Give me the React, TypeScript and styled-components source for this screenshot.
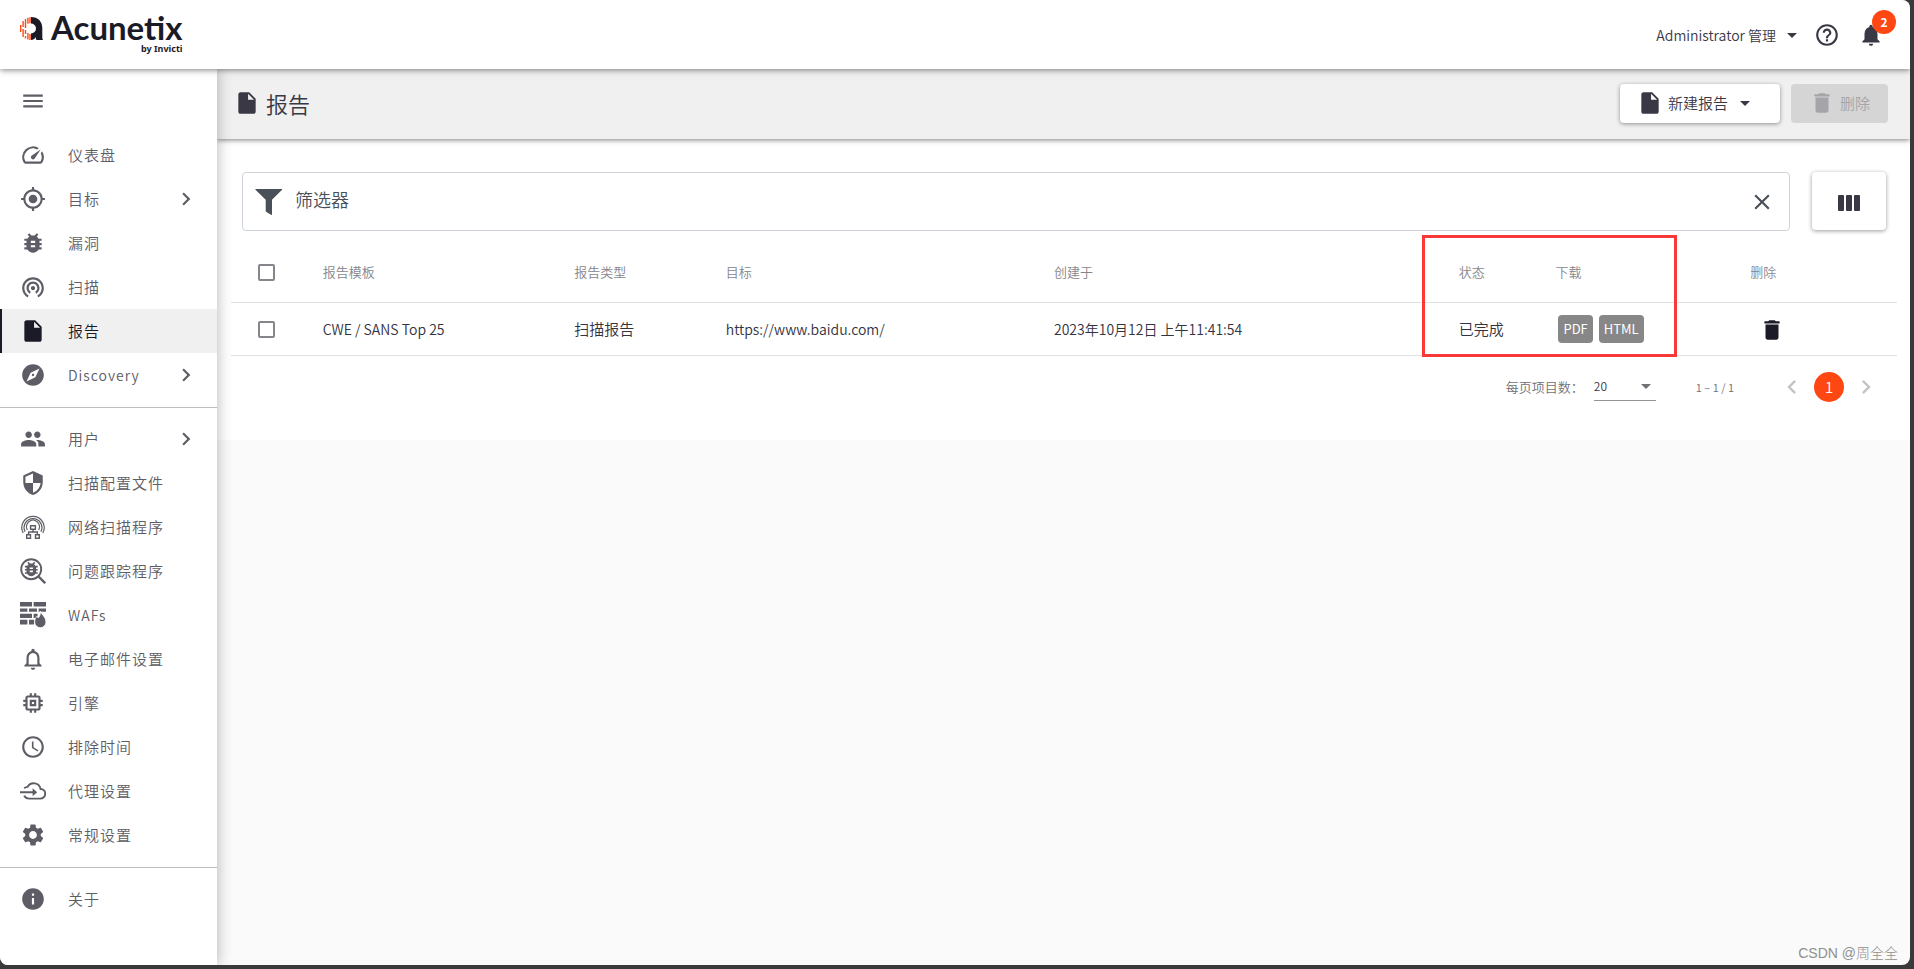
import React from "react";
import styled, { createGlobalStyle, css } from "styled-components";
import {
  MdMenu, MdGpsFixed, MdBugReport, MdInsertDriveFile, MdExplore, MdPeople,
  MdInfo, MdSettings, MdAccessTime, MdNotificationsNone, MdNotifications,
  MdHelpOutline, MdChevronRight, MdChevronLeft, MdArrowDropDown, MdDelete, MdClose,
  MdWifiTethering, MdMemory, MdSecurity,
} from "react-icons/md";

const ink = "#1b1b28";
const slate = "#5e5d66";
const accent = "#ff4713";

const GlobalStyle = createGlobalStyle`
  *, *::before, *::after { box-sizing: border-box; }
  body {
    margin: 0;
    background: #3b3a3a;
    color: #33323f;
    font-family: "Noto Sans CJK SC", "Noto Sans", sans-serif;
    font-size: 14px;
    font-weight: 350;
    line-height: 20px;
  }
  button, input, select { font: inherit; color: inherit; }
  svg { display: block; flex: none; }
`;

const Frame = styled.div`
  min-height: 100vh;
  padding: 0 4px 4px 0;
  display: flex;
`;

const Page = styled.div`
  position: relative;
  flex: 1;
  min-width: 0;
  display: flex;
  flex-direction: column;
  overflow: hidden;
  border-radius: 0 8px 8px 8px;
  background: #fafafa;
`;

const Header = styled.header`
  position: relative;
  z-index: 3;
  display: flex;
  justify-content: space-between;
  align-items: center;
  height: 69px;
  padding: 0 22px 0 20px;
  background: #fff;
  box-shadow: 0 1px 6px rgba(0, 0, 0, 0.5);
`;

const Brand = styled.a`
  display: flex;
  gap: 8px;
  padding-bottom: 4px;
  color: ${ink};
  text-decoration: none;
`;

const Mark = styled.svg`
  margin-top: 6px;
`;

const BrandText = styled.span`
  display: flex;
  flex-direction: column;
  align-items: flex-end;
`;

const BrandName = styled.span`
  font: 700 33px/32px Lato, sans-serif;
`;

const BrandBy = styled.span`
  font: 700 9px/12px "Noto Sans", sans-serif;
`;

const HeaderTools = styled.div`
  display: flex;
  align-items: center;
  color: #3a3845;
`;

const PlainButton = styled.button`
  display: flex;
  align-items: center;
  padding: 0;
  border: 0;
  background: none;
  cursor: pointer;
`;

const UserButton = styled(PlainButton)`
  gap: 4px;
  margin-right: 10px;
`;

const BellButton = styled(PlainButton)`
  position: relative;
  margin: 0 4px 0 18px;
`;

const Badge = styled.span`
  position: absolute;
  left: 14px;
  bottom: 14px;
  width: 24px;
  border-radius: 12px;
  background: ${accent};
  color: #fff;
  font-size: 12px;
  font-weight: 700;
  line-height: 24px;
  text-align: center;
`;

const Body = styled.div`
  flex: 1;
  display: flex;
`;

const Sidebar = styled.nav`
  position: relative;
  z-index: 2;
  flex: none;
  width: 217px;
  background: #fff;
  box-shadow: 0 0 14px rgba(0, 0, 0, 0.3);
`;

const MenuToggle = styled(PlainButton)`
  height: 64px;
  padding-left: 20px;
  color: ${slate};
`;

const NavGroup = styled.ul`
  margin: 0;
  padding: 0 0 10px;
  list-style: none;

  & + & {
    padding-top: 9px;
    border-top: 1px solid #bdbdbf;
  }
`;

const NavLink = styled.a<{ $active?: boolean }>`
  display: flex;
  align-items: center;
  height: 44px;
  padding: 0 18px;
  border-left: 2px solid transparent;
  color: ${slate};
  letter-spacing: 1px;
  text-decoration: none;

  ${({ $active }) => $active && css`
    border-color: ${ink};
    background: #f0f0f0;
    color: ${ink};
  `}
`;

const NavIcon = styled.span`
  display: flex;
  justify-content: center;
  width: 26px;
  margin-right: 22px;
`;

const NavLabel = styled.span`
  flex: 1;
  font-size: 15px;

  &:lang(en) { font-size: 14px; }
`;

const Main = styled.main`
  flex: 1;
  min-width: 0;
`;

const TitleBar = styled.div`
  position: relative;
  z-index: 1;
  display: flex;
  justify-content: space-between;
  align-items: center;
  height: 70px;
  padding: 0 22px 2px 17px;
  background: #f0f0f0;
  color: #3a3845;
  box-shadow: 0 1px 5px rgba(0, 0, 0, 0.5);
`;

const Title = styled.h1`
  display: flex;
  align-items: center;
  gap: 6px;
  margin: 0;
  font-size: 22px;
  font-weight: 350;
  line-height: 32px;
`;

const Actions = styled.div`
  display: flex;
  gap: 11px;
`;

const ActionButton = styled.button`
  display: flex;
  align-items: center;
  gap: 5px;
  height: 39px;
  padding: 0 23px 0 17px;
  border: 0;
  border-radius: 4px;
  background: #fff;
  font-size: 15px;
  box-shadow: 0 1px 4px rgba(0, 0, 0, 0.4);
  cursor: pointer;

  &:disabled {
    padding: 0 18px;
    background: #d5d5d5;
    color: #a5a4a9;
    box-shadow: none;
  }
`;

const Panel = styled.section`
  padding: 33px 13px 38px 14px;
  background: #fff;
`;

const FilterRow = styled.div`
  display: flex;
  gap: 22px;
  padding: 0 11px;
`;

const FilterBox = styled.div`
  flex: 1;
  display: flex;
  align-items: center;
  gap: 12px;
  height: 59px;
  padding: 0 14px 0 12px;
  border: 1px solid #ced4da;
  border-radius: 4px;
  color: #495057;
`;

const FilterInput = styled.input`
  flex: 1;
  min-width: 0;
  padding: 0 0 6px;
  border: 0;
  outline: 0;
  background: none;
  font-size: 18px;

  &::placeholder { color: #495057; opacity: 1; }
`;

const ColumnsButton = styled.button`
  display: flex;
  align-items: center;
  justify-content: center;
  width: 74px;
  height: 58px;
  padding: 3px 0 0;
  border: 0;
  border-radius: 4px;
  background: #fff;
  box-shadow: 0 1px 4px rgba(0, 0, 0, 0.4);
  color: #3a3845;
  cursor: pointer;
`;

const TableArea = styled.div`
  position: relative;
  margin-top: 11px;
`;

const Table = styled.table`
  width: 100%;
  table-layout: fixed;
  border-collapse: collapse;
`;

const Th = styled.th`
  height: 60px;
  padding: 0;
  border-bottom: 1px solid #e0e0e0;
  color: #86858b;
  font-size: 13px;
  font-weight: 350;
  text-align: left;
`;

const Td = styled.td<{ $cjk?: boolean }>`
  height: 53px;
  padding: 0;
  border-bottom: 1px solid #e0e0e0;
  font-size: ${({ $cjk }) => ($cjk ? 15 : 14)}px;
`;

const Col = styled.col<{ $share: number }>`
  width: ${({ $share }) => $share}%;
`;

const Tick = styled.input`
  display: block;
  appearance: none;
  width: 17px;
  height: 17px;
  margin: 2px 0 0 27px;
  border: 2px solid #86858b;
  border-radius: 2px;
`;

const Chips = styled.div`
  display: flex;
  gap: 6px;
  padding-left: 3px;
`;

const Chip = styled.a`
  padding: 4px 5px;
  border-radius: 4px;
  background: #878787;
  color: #fff;
  font-size: 13px;
  font-weight: 400;
  text-decoration: none;
`;

const DeleteButton = styled(PlainButton)`
  margin: 2px 0 0 9px;
  color: ${ink};
`;

const Highlight = styled.div`
  position: absolute;
  top: -7px;
  bottom: -1px;
  left: 71.5%;
  width: 15.3%;
  border: 3px solid #fb3838;
  pointer-events: none;
`;

const Pager = styled.div`
  display: flex;
  align-items: center;
  justify-content: flex-end;
  padding: 16px 17px 0 0;
  color: #717076;
  font-size: 13px;
`;

const PagerLabel = styled.label`
  margin-right: 10px;
`;

const SelectBox = styled.div`
  position: relative;
  width: 62px;
  margin-right: 40px;
  border-bottom: 1px solid #949398;
`;

const Select = styled.select`
  display: block;
  width: 100%;
  height: 28px;
  padding: 0;
  border: 0;
  appearance: none;
  background: none;
  color: #3a3845;
  font-size: 12px;
`;

const SelectArrow = styled(MdArrowDropDown)`
  position: absolute;
  top: 2px;
  right: -2px;
  pointer-events: none;
`;

const Range = styled.span`
  margin-right: 44px;
  font-size: 11px;
`;

const PageStep = styled(PlainButton)`
  color: #c3c2c6;
`;

const PageNumber = styled.button`
  width: 30px;
  height: 30px;
  margin: 0 8px;
  padding: 0;
  border: 0;
  border-radius: 50%;
  background: ${accent};
  color: #fff;
  font-size: 15px;
  line-height: 30px;
`;

const Watermark = styled.small`
  position: absolute;
  right: 12px;
  bottom: 2px;
  color: #8f8f8f;
  font: 300 14px/20px "Liberation Sans", "Noto Sans CJK SC", sans-serif;
`;

const GaugeIcon = () => (
  <svg width="26" height="26" viewBox="0 0 24 24" fill="currentColor" aria-hidden="true">
    <path d="M20.38 8.57l-1.23 1.85a8 8 0 0 1-.22 7.58H5.07A8 8 0 0 1 15.58 6.85l1.85-1.23A10 10 0 0 0 3.35 19a2 2 0 0 0 1.72 1h13.85a2 2 0 0 0 1.74-1 10 10 0 0 0-.27-10.44z" />
    <path d="M10.59 15.41a2 2 0 0 0 2.83 0l5.66-8.49-8.49 5.66a2 2 0 0 0 0 2.83z" />
  </svg>
);

const NetworkScanIcon = () => (
  <svg width="26" height="26" viewBox="0 0 26 26" fill="none" stroke="currentColor" aria-hidden="true">
    <path strokeWidth="1.2" d="M3.2 19A11.2 11.2 0 1 1 22.800 19M5.100 17.600A8.900 8.900 0 1 1 20.900 17.600M7.400 16A6.500 6.500 0 1 1 18.600 16" />
    <path strokeWidth="1.400" d="M10.600 11.700h4.800v3.600h-4.800zM6.700 20.700h3.800v3.600H6.700zM15.500 20.700h3.800v3.600h-3.800zM13 15.300v2.700M8.600 20.700V18h8.800v2.700" />
  </svg>
);

const BugSearchIcon = () => (
  <svg width="26" height="26" viewBox="0 0 26 26" fill="none" stroke="currentColor" aria-hidden="true">
    <circle cx="11.2" cy="11.2" r="10" strokeWidth="1.9" />
    <path d="M18.5 18.5l6.7 6.7" strokeWidth="2.4" />
    <g transform="translate(1.700 1.400) scale(.8)" fill="currentColor" stroke="none">
      <path d="M20 8h-2.81a5.985 5.985 0 0 0-1.82-1.96L17 4.41 15.59 3l-2.17 2.17a6.002 6.002 0 0 0-2.83 0L8.41 3 7 4.41l1.62 1.63C7.88 6.55 7.26 7.22 6.81 8H4v2h2.09c-.05.33-.09.66-.09 1v1H4v2h2v1c0 .34.04.67.09 1H4v2h2.81c1.04 1.79 2.97 3 5.19 3s4.15-1.21 5.19-3H20v-2h-2.09c.05-.33.09-.66.09-1v-1h2v-2h-2v-1c0-.34-.04-.67-.09-1H20V8zm-6 8h-4v-2h4v2zm0-4h-4v-2h4v2z" />
    </g>
  </svg>
);

const FirewallIcon = () => (
  <svg width="26" height="26" viewBox="0 0 26 26" fill="currentColor" aria-hidden="true">
    <path d="M0 0h12v4.6H0zM13.6 0H26v4.6H13.6zM0 6.4h7.4v3.4H0zM9 6.4h8v3.4H9zM18.6 6.4H26v3.4h-7.4zM0 11.8h12v4.2H0zM13.6 11.8h4v4.2h-4zM0 17.8h7.4v4.6H0zM9 17.8h5v4.6H9z" />
    <path d="M20.4 9.2c.2 2.6 5.6 5.400 5.600 10.800a5.700 5.700 0 0 1-11.400 0c0-2.800 1.400-4.800 2.600-6l1 2c1.600-1.600 2.400-4 2.200-6.800z" stroke="#fff" strokeWidth=".8" />
  </svg>
);

const ProxyIcon = () => (
  <svg width="26" height="26" viewBox="0 0 26 26" fill="none" stroke="currentColor" strokeWidth="1.9" aria-hidden="true">
    <path d="M4.200 10.200C5.200 9.400 6.400 9 7.600 8.900A7 7 0 0 1 20.600 11a4.700 4.700 0 0 1-.3 9.600H9.200c-2.400 0-4.200-1.200-5-3" />
    <path d="M0 14.300h15.500" />
    <path d="M12.600 10.300l4.600 4-4.600 4z" fill="currentColor" stroke="none" />
  </svg>
);

const FunnelIcon = () => (
  <svg width="28" height="28" viewBox="0 0 28 28" fill="currentColor" aria-hidden="true">
    <path d="M.6 1h26.3c.3 0 .4.400.2.700L17 11.800V26.500c0 .4-.3.500-.7.400l-5.600-3.400V11.800L.500 1.700C.2 1.400.3 1 .6 1z" />
  </svg>
);

const ColumnsIcon = () => (
  <svg width="22" height="16" viewBox="0 0 22 16" fill="currentColor" aria-hidden="true">
    <rect width="6" height="16" rx="1" />
    <rect x="8" width="6" height="16" rx="1" />
    <rect x="16" width="6" height="16" rx="1" />
  </svg>
);

const LogoMark = () => (
  <Mark width="23" height="24" viewBox="0 0 23 24" aria-hidden="true">
    <path fill={ink} d="M11 0c7 0 11.300 4.500 11.300 11v9.500c0 1 .2 1.700.7 2.500h-6.500c-.6-.8-.8-1.700-.8-3-.9 2-2.500 3-4.700 3v-6.500a5 5 0 0 0 0-10z" />
    <g stroke={accent} strokeWidth="1.400" fill="none">
      <path d="M.700 8v7M3.100 4v6M3.100 12v8M5.500 2v9M5.500 13v4M5.500 19v2.500M7.900 .8v6M7.900 16v6.600M10 .2v6M10 17v6" />
    </g>
  </Mark>
);

type NavEntry = { label: string; icon: React.ReactNode; more?: boolean; active?: boolean; lang?: string };

const navGroups: NavEntry[][] = [
  [
    { label: "仪表盘", icon: <GaugeIcon /> },
    { label: "目标", icon: <MdGpsFixed size={26} />, more: true },
    { label: "漏洞", icon: <MdBugReport size={26} /> },
    { label: "扫描", icon: <MdWifiTethering size={26} /> },
    { label: "报告", icon: <MdInsertDriveFile size={26} />, active: true },
    { label: "Discovery", icon: <MdExplore size={26} />, more: true, lang: "en" },
  ],
  [
    { label: "用户", icon: <MdPeople size={26} />, more: true },
    { label: "扫描配置文件", icon: <MdSecurity size={26} /> },
    { label: "网络扫描程序", icon: <NetworkScanIcon /> },
    { label: "问题跟踪程序", icon: <BugSearchIcon /> },
    { label: "WAFs", icon: <FirewallIcon />, lang: "en" },
    { label: "电子邮件设置", icon: <MdNotificationsNone size={26} /> },
    { label: "引擎", icon: <MdMemory size={26} /> },
    { label: "排除时间", icon: <MdAccessTime size={26} /> },
    { label: "代理设置", icon: <ProxyIcon /> },
    { label: "常规设置", icon: <MdSettings size={26} /> },
  ],
  [{ label: "关于", icon: <MdInfo size={26} /> }],
];

const columnShares = [5.5, 15.1, 9.1, 19.7, 24.3, 5.8, 11.7, 8.8];
const headings = ["报告模板", "报告类型", "目标", "创建于", "状态", "下载", "删除"];

export default function App() {
  return (
    <>
      <GlobalStyle />
      <Frame lang="zh-CN">
        <Page>
          <Header>
            <Brand href="#">
              <LogoMark />
              <BrandText>
                <BrandName>Acunetix</BrandName>
                <BrandBy>by Invicti</BrandBy>
              </BrandText>
            </Brand>
            <HeaderTools>
              <UserButton>Administrator 管理<MdArrowDropDown size={24} /></UserButton>
              <PlainButton aria-label="帮助"><MdHelpOutline size={26} /></PlainButton>
              <BellButton aria-label="通知">
                <MdNotifications size={26} />
                <Badge>2</Badge>
              </BellButton>
            </HeaderTools>
          </Header>
          <Body>
            <Sidebar>
              <MenuToggle aria-label="菜单"><MdMenu size={26} /></MenuToggle>
              {navGroups.map((group, index) => (
                <NavGroup key={index}>
                  {group.map((entry) => (
                    <li key={entry.label}>
                      <NavLink href="#" $active={entry.active}>
                        <NavIcon>{entry.icon}</NavIcon>
                        <NavLabel lang={entry.lang}>{entry.label}</NavLabel>
                        {entry.more && <MdChevronRight size={26} />}
                      </NavLink>
                    </li>
                  ))}
                </NavGroup>
              ))}
            </Sidebar>
            <Main>
              <TitleBar>
                <Title><MdInsertDriveFile size={26} />报告</Title>
                <Actions>
                  <ActionButton><MdInsertDriveFile size={26} />新建报告<MdArrowDropDown size={24} /></ActionButton>
                  <ActionButton disabled><MdDelete size={26} />删除</ActionButton>
                </Actions>
              </TitleBar>
              <Panel>
                <FilterRow>
                  <FilterBox>
                    <FunnelIcon />
                    <FilterInput aria-label="筛选器" placeholder="筛选器" />
                    <PlainButton aria-label="清除"><MdClose size={26} /></PlainButton>
                  </FilterBox>
                  <ColumnsButton aria-label="列"><ColumnsIcon /></ColumnsButton>
                </FilterRow>
                <TableArea>
                  <Table>
                    <colgroup>
                      {columnShares.map((share, index) => <Col key={index} $share={share} />)}
                    </colgroup>
                    <thead>
                      <tr>
                        <Th><Tick type="checkbox" aria-label="全选" /></Th>
                        {headings.map((heading) => <Th key={heading}>{heading}</Th>)}
                      </tr>
                    </thead>
                    <tbody>
                      <tr>
                        <Td><Tick type="checkbox" aria-label="CWE / SANS Top 25" /></Td>
                        <Td>CWE / SANS Top 25</Td>
                        <Td $cjk>扫描报告</Td>
                        <Td>https://www.baidu.com/</Td>
                        <Td>2023年10月12日 上午11:41:54</Td>
                        <Td $cjk>已完成</Td>
                        <Td>
                          <Chips>
                            <Chip href="#">PDF</Chip>
                            <Chip href="#">HTML</Chip>
                          </Chips>
                        </Td>
                        <Td><DeleteButton aria-label="删除报告"><MdDelete size={26} /></DeleteButton></Td>
                      </tr>
                    </tbody>
                  </Table>
                  <Highlight />
                </TableArea>
                <Pager>
                  <PagerLabel htmlFor="page-size">每页项目数：</PagerLabel>
                  <SelectBox>
                    <Select id="page-size" defaultValue="20"><option>20</option></Select>
                    <SelectArrow size={24} />
                  </SelectBox>
                  <Range>1 – 1 / 1</Range>
                  <PageStep aria-label="上一页"><MdChevronLeft size={28} /></PageStep>
                  <PageNumber>1</PageNumber>
                  <PageStep aria-label="下一页"><MdChevronRight size={28} /></PageStep>
                </Pager>
              </Panel>
            </Main>
          </Body>
          <Watermark>CSDN @周全全</Watermark>
        </Page>
      </Frame>
    </>
  );
}
